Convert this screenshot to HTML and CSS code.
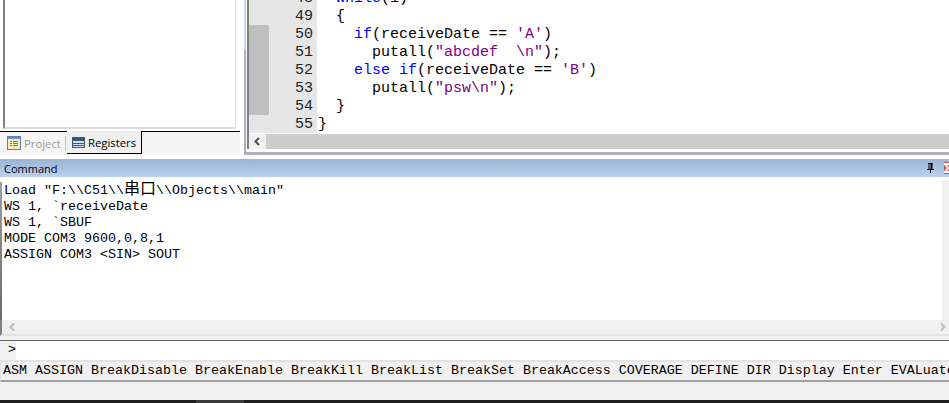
FILE: index.html
```html
<!DOCTYPE html>
<html lang="zh">
<head>
<meta charset="utf-8">
<title>Command</title>
<link rel="stylesheet" href="styles.css">
</head>
<body>
<div class="top">
  <aside class="side">
    <div class="tree"></div>
    <div class="tabs">
      <div class="tab">
        <svg class="ico" width="14" height="14" viewBox="0 0 14 14"><rect x=".5" y=".5" width="13" height="13" fill="#f3edb8" stroke="#5f7fa8"/><rect x="1" y="1" width="12" height="2" fill="#6f8fc0"/><path d="M3 5h2v1H3zM6 5h5v1H6zM3 7h2v1H3zM6 7h5v1H6zM3 9h2v1H3zM6 9h5v1H6z" fill="#7a8a20"/></svg>
        <span>Project</span>
        <i class="sep"></i>
      </div>
      <div class="tab tab-on">
        <svg class="ico" width="13" height="11" viewBox="0 0 13 11"><rect x=".5" y=".5" width="12" height="10" fill="#d5dfeb" stroke="#3d5a80"/><path d="M0 3.500h13M0 6.500h13M0 8.500h13" stroke="#3d5a80"/><rect x="1" y="1" width="11" height="2" fill="#34527a"/></svg>
        <span>Registers</span>
      </div>
      <div class="tab-rest"></div>
    </div>
  </aside>
  <div class="frame">
    <main class="editor">
      <div class="code-view">
        <div class="code">
          <div class="ln"><i class="mark"></i><b>48</b><code>  <span class="k">while</span>(1)</code></div>
          <div class="ln"><i class="mark"></i><b>49</b><code>  {</code></div>
          <div class="ln"><i class="mark on"></i><b>50</b><code>    <span class="k">if</span>(receiveDate == <span class="s">'A'</span>)</code></div>
          <div class="ln"><i class="mark on"></i><b>51</b><code>      putall(<span class="s">"abcdef  \n"</span>);</code></div>
          <div class="ln"><i class="mark on"></i><b>52</b><code>    <span class="k">else</span> <span class="k">if</span>(receiveDate == <span class="s">'B'</span>)</code></div>
          <div class="ln"><i class="mark on"></i><b>53</b><code>      putall(<span class="s">"psw\n"</span>);</code></div>
          <div class="ln"><i class="mark on"></i><b>54</b><code>  }</code></div>
          <div class="ln"><i class="mark"></i><b>55</b><code>}</code></div>
        </div>
      </div>
      <div class="hbar">
        <svg class="arr" width="17" height="15" viewBox="0 0 17 15"><path d="M10 4 6.500 7.500 10 11" fill="none" stroke="#505050" stroke-width="2"/></svg>
        <div class="thumb"></div>
      </div>
    </main>
  </div>
</div>
<section class="cmd">
  <header class="cmd-title">
    <span>Command</span>
    <svg class="pin" width="9" height="10" viewBox="0 0 9 10"><path d="M2 0h5v1H6.500v5H8v1H5v3H4V7H1V6h1.500V1H2zM3.500 1v5h1V1z" fill="#000" fill-rule="evenodd"/></svg>
    <div class="close"><svg width="5" height="12" viewBox="0 0 5 12"><path d="M0 2h5M1 2l3 4-3 4M0 10h5" stroke="#fff" stroke-width="2" fill="none"/></svg></div>
  </header>
  <div class="out">
    <pre class="log">Load "F:\\C51\\<span class="cjk">串口</span>\\Objects\\main"
WS 1, `receiveDate
WS 1, `SBUF
MODE COM3 9600,0,8,1
ASSIGN COM3 &lt;SIN&gt; SOUT</pre>
    <div class="vbar"></div>
  </div>
  <div class="out-bar">
    <svg width="12" height="12" viewBox="0 0 12 12"><path d="M8 2.500 4.500 6 8 9.500" fill="none" stroke="#bdbdbd" stroke-width="2"/></svg>
    <svg width="12" height="12" viewBox="0 0 12 12"><path d="M4 2.500 7.500 6 4 9.500" fill="none" stroke="#bdbdbd" stroke-width="2"/></svg>
  </div>
  <div class="input">
    <div class="prompt">&gt;</div>
    <div class="field"></div>
  </div>
  <div class="hints">ASM ASSIGN BreakDisable BreakEnable BreakKill BreakList BreakSet BreakAccess COVERAGE DEFINE DIR Display Enter EVALuate</div>
</section>
<footer class="task"><div class="task-item"></div></footer>
</body>
</html>
```
FILE: styles.css
```css
* { box-sizing: border-box; }
html, body { margin: 0; padding: 0; }
body {
  width: 949px;
  height: 403px;
  overflow: hidden;
  background: #f0f0f0;
  display: flex;
  flex-direction: column;
  font-family: "Liberation Mono", "Noto Sans CJK SC", monospace;
}
.top {
  height: 159px;
  flex: none;
  display: flex;
  background: #fff;
}
.side {
  width: 240px;
  flex: none;
  height: 155px;
  background: #fff;
  display: flex;
  flex-direction: column;
}
.tree {
  height: 129px;
  flex: none;
  margin: 0 4px 2px 3px;
  background: #fff;
  border-left: 2px solid #808080;
  border-right: 1px solid #dcdcdc;
  border-bottom: 2px solid #dcdcdc;
}
.tabs {
  flex: 1;
  display: flex;
  background: #f5f5f5;
  font: 11.3px "Open Sans", "Liberation Sans", sans-serif;
}
.tab {
  display: flex;
  align-items: center;
  gap: 3px;
  width: 67px;
  height: 23px;
  padding-left: 7px;
  color: #9a9a9a;
  border-top: 1px solid #000;
}
.sep {
  width: 1px;
  height: 15px;
  flex: none;
  margin-left: auto;
  margin-right: 1px;
  background: #c0c0c0;
}
.tab-on {
  width: 75px;
  padding-left: 5px;
  color: #000;
  background: #f0f0f0;
  border-top: 0;
  border-right: 1px solid #000;
  border-bottom: 1px solid #000;
}
.ico { flex: none; }
.tab-rest {
  flex: 1;
  border-top: 1px solid #000;
}
.frame {
  flex: 1;
  height: 155px;
  margin-left: 4px;
  padding: 0 0 3px 1px;
  border-left: 2px solid #b4bccb;
  border-bottom: 3px solid;
  border-image: linear-gradient(#ccd8f0 33%, #aeb2c0 33%) 1;
  background: #fff;
}
.editor {
  height: 149px;
  border-left: 2px solid #808080;
  display: flex;
  flex-direction: column;
  background: #fff;
}
.code-view {
  height: 134px;
  flex: none;
  overflow: hidden;
}
.code {
  margin-top: -11px;
  font-size: 15px;
  line-height: 18px;
}
.ln {
  display: flex;
  height: 18px;
  white-space: pre;
}
.mark {
  width: 20px;
  flex: none;
  background: #e6e6e6;
}
.mark.on { background: #c0c0c0; }
.ln b {
  width: 48px;
  flex: none;
  font-weight: normal;
  text-align: right;
  padding: 1px 4px 0 0;
  background: #e6e6e6;
  color: #222;
}
.ln code {
  font: inherit;
  color: #000;
  padding-top: 1px;
  margin-left: 1px;
}
.k { color: #0000ff; }
.s { color: #800080; }
.hbar {
  height: 15px;
  flex: none;
  display: flex;
  background: #f0f0f0;
}
.arr { flex: none; }
.thumb {
  flex: 1;
  background: #cdcdcd;
}
.cmd {
  flex: 1;
  display: flex;
  flex-direction: column;
  min-height: 0;
}
.cmd-title {
  height: 18px;
  flex: none;
  display: flex;
  align-items: center;
  padding-left: 4px;
  font: 11px "Open Sans", "Liberation Sans", sans-serif;
  color: #000020;
  background: linear-gradient(#9ab4d3, #bad2ec);
}
.cmd-title span { flex: 1; }
.pin { margin-right: 9px; flex: none; }
.close {
  width: 5px;
  height: 12px;
  flex: none;
  background: #c75050;
  overflow: hidden;
  display: flex;
}
.out {
  height: 143px;
  flex: none;
  display: flex;
  background: #fff;
  border-top: 3px solid;
  border-left: 2px solid #808080;
  border-image: linear-gradient(#fff 2%, #a0a0a0 2%, #696969) 1;
}
.log {
  flex: 1;
  margin: 0;
  padding: 3px 0 0 2px;
  font: inherit;
  font-size: 13.33px;
  line-height: 16px;
  color: #000;
}
.cjk { font-family: "Noto Sans CJK SC", sans-serif; font-size: 16px; line-height: 0; }
.vbar {
  width: 7px;
  flex: none;
  background: #f0f0f0;
}
.out-bar {
  height: 16px;
  flex: none;
  display: flex;
  justify-content: space-between;
  align-items: center;
  padding: 0 0 1px 4px;
  background: #f0f0f0;
  border-left: 2px solid #808080;
  border-bottom: 2px solid #e2e2e2;
}
.input {
  height: 20px;
  flex: none;
  display: flex;
  border-top: 1px solid #696969;
  margin-top: 4px;
}
.prompt {
  width: 16px;
  flex: none;
  padding: 1px 0 0 8px;
  font-size: 13.33px;
  line-height: 16px;
  color: #000;
}
.field { flex: 1; background: #fff; }
.hints {
  height: 22px;
  flex: none;
  padding: 1px 0 0 2px;
  font-size: 13.33px;
  line-height: 16px;
  white-space: nowrap;
  overflow: hidden;
  color: #000;
  background: #f0f0f0;
  border-top: 2px solid #e2e2e2;
  border-left: 1px solid #e2e2e2;
  border-bottom: 2px solid #a0a0a0;
}
.task {
  margin-top: auto;
  height: 3px;
  flex: none;
  padding-left: 196px;
  background: #1e1e1e;
}
.task-item {
  width: 48px;
  height: 3px;
  background: #3a3a3a;
}
```
